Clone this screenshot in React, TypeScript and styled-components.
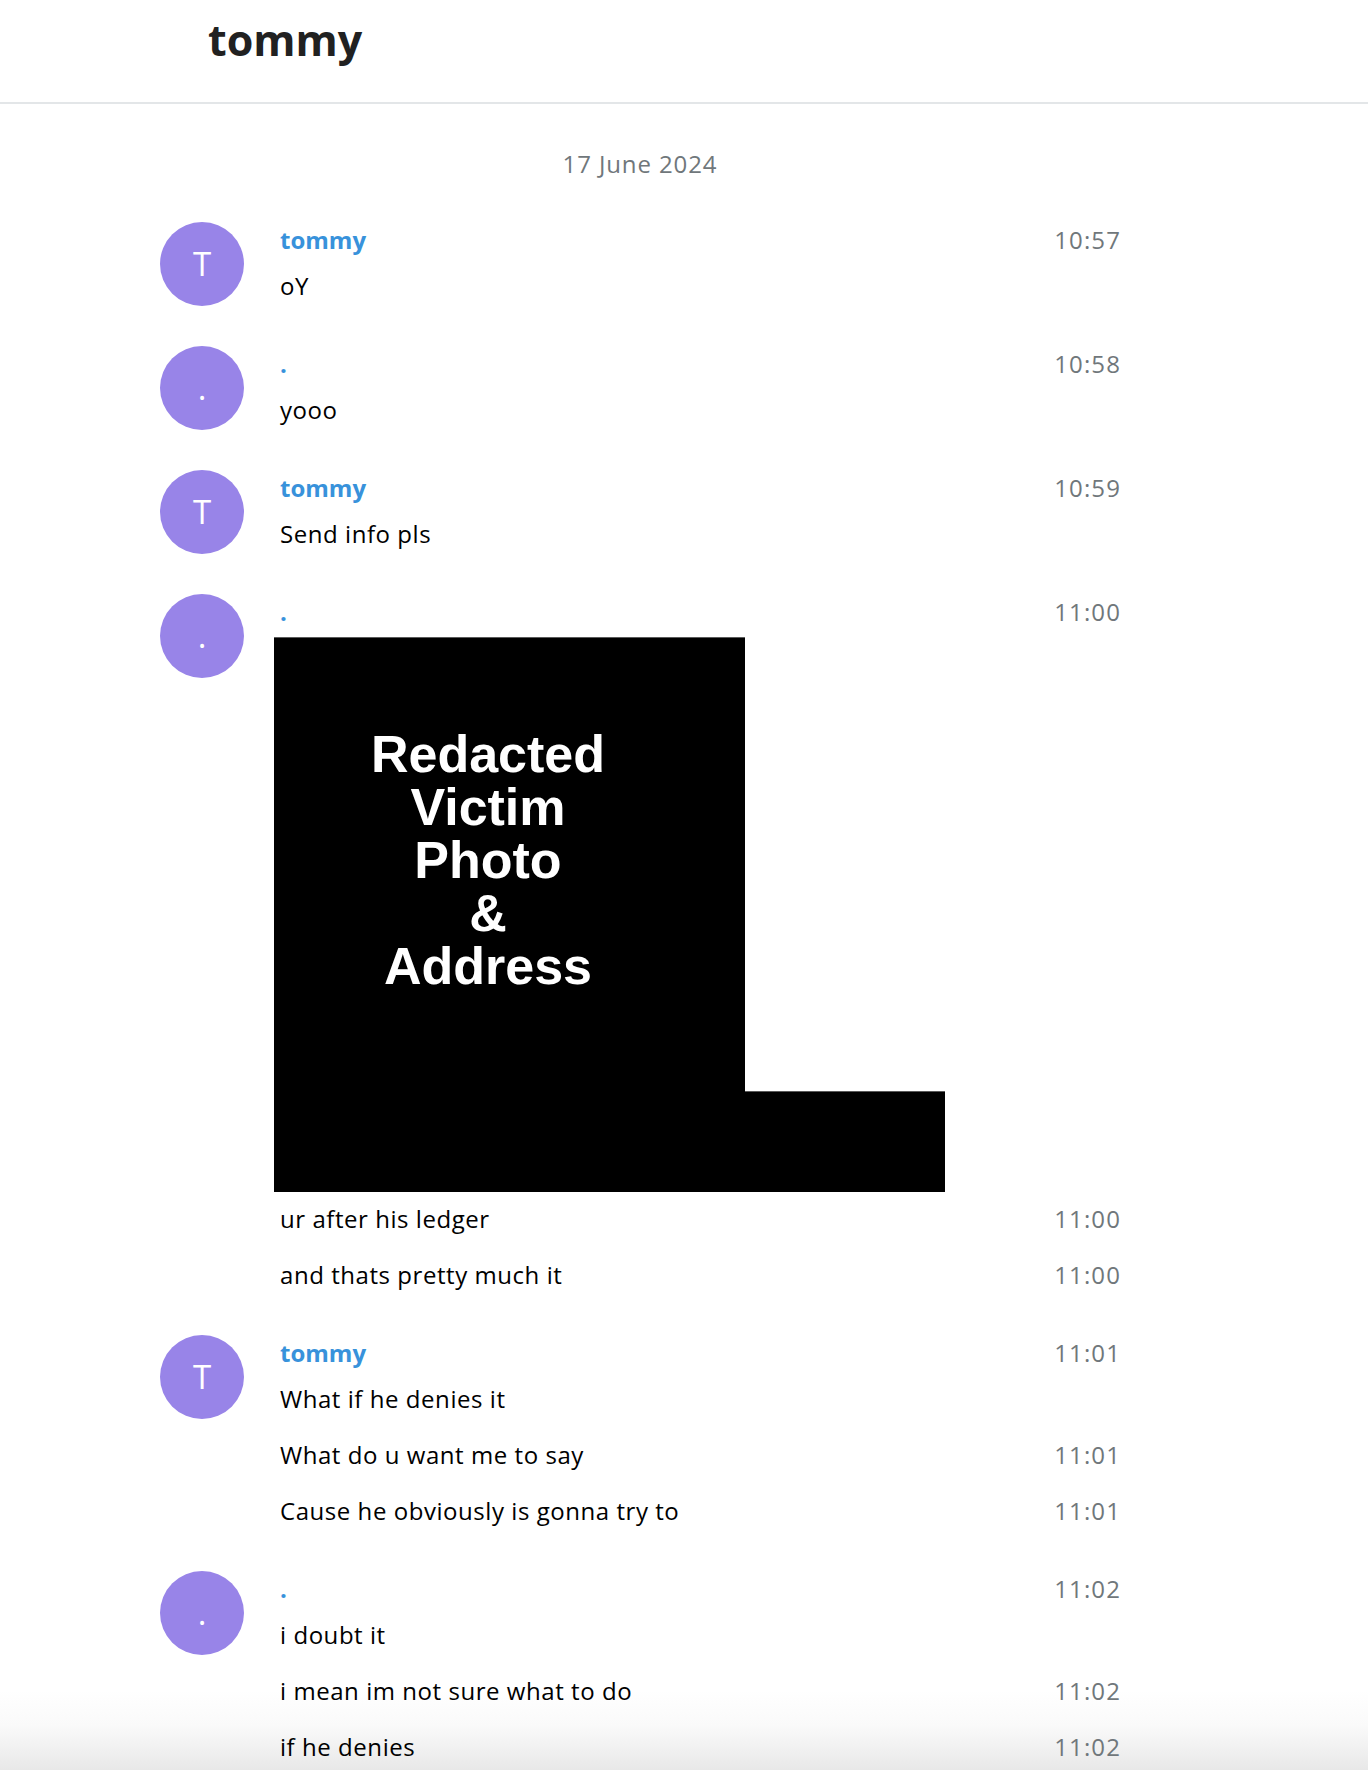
import * as React from "react";
import styled, { createGlobalStyle } from "styled-components";

const GlobalStyle = createGlobalStyle`
  html, body {
    margin: 0;
    padding: 0;
  }
  body {
    font-family: "Open Sans", "Liberation Sans", Arial, sans-serif;
    font-size: 24px;
    line-height: 36px;
    color: #000000;
    background: #ffffff;
  }
`;

const Page = styled.div`
  min-height: 1770px;
  background: linear-gradient(
    to bottom,
    #ffffff 0,
    #ffffff 1690px,
    #fafafa 1725px,
    #e8e8e8 1770px
  );
`;

const Header = styled.div`
  height: 102px;
  border-bottom: 2px solid #e3e6e8;
  padding-left: 208px;
`;

const HeaderTitle = styled.div`
  padding-top: 10px;
  font-size: 43px;
  line-height: 60px;
  font-weight: 700;
  color: #212121;
`;

const Column = styled.div`
  width: 960px;
  margin-left: 160px;
  padding-bottom: 40px;
`;

const DateLabel = styled.div`
  margin-top: 42px;
  margin-bottom: 40px;
  text-align: center;
  color: #70777b;
  letter-spacing: 0.9px;
`;

const Group = styled.div`
  display: flex;
  align-items: flex-start;
  gap: 36px;
  margin-bottom: 42px;
`;

// the circle is a bit taller than name + first line, keep it from pushing the group
const Avatar = styled.div`
  flex: 0 0 84px;
  width: 84px;
  height: 84px;
  margin-bottom: -2px;
  border-radius: 50%;
  background: #9884e8;
  color: #ffffff;
  font-size: 33px;
  line-height: 84px;
  text-align: center;
  user-select: none;
`;

const Body = styled.div`
  flex: 1;
  display: flex;
  flex-direction: column;
`;

const Row = styled.div<{ $gap: number }>`
  display: flex;
  justify-content: space-between;
  align-items: flex-start;
  margin-top: ${(p) => p.$gap}px;
  height: 36px;
`;

const Name = styled.div`
  color: #3892db;
  font-weight: 700;
`;

const Text = styled.span`
  letter-spacing: 0.55px;
`;

const Time = styled.div`
  color: #70777b;
  letter-spacing: 1.1px;
  margin-right: -1px;
`;

const Photo = styled.div`
  display: grid;
  grid-template-columns: 471px 200px;
  grid-template-rows: 454px 101px;
  margin-top: 7px;
  margin-left: -6px;
`;

const PhotoMain = styled.div`
  grid-column: 1;
  grid-row: 1 / span 2;
  background: #000000;
  box-shadow: inset 0 1px 0 #5a5a5a;
  padding: 91px 43px 0 0;
  color: #ffffff;
  font-family: "Liberation Sans", Arial, sans-serif;
  font-weight: 700;
  font-size: 52px;
  line-height: 53px;
  text-align: center;
`;

const PhotoTail = styled.div`
  grid-column: 2;
  grid-row: 2;
  background: #000000;
  box-shadow: inset 0 1px 0 #5a5a5a;
`;

type Item =
  | { kind: "text"; text: string; time: string }
  | { kind: "photo"; time: string };

interface IGroup {
  initial: string;
  name: string;
  items: Item[];
}

const groups: IGroup[] = [
  { initial: "T", name: "tommy", items: [{ kind: "text", text: "oY", time: "10:57" }] },
  { initial: ".", name: ".", items: [{ kind: "text", text: "yooo", time: "10:58" }] },
  { initial: "T", name: "tommy", items: [{ kind: "text", text: "Send info pls", time: "10:59" }] },
  {
    initial: ".",
    name: ".",
    items: [
      { kind: "photo", time: "11:00" },
      { kind: "text", text: "ur after his ledger", time: "11:00" },
      { kind: "text", text: "and thats pretty much it", time: "11:00" },
    ],
  },
  {
    initial: "T",
    name: "tommy",
    items: [
      { kind: "text", text: "What if he denies it", time: "11:01" },
      { kind: "text", text: "What do u want me to say", time: "11:01" },
      { kind: "text", text: "Cause he obviously is gonna try to", time: "11:01" },
    ],
  },
  {
    initial: ".",
    name: ".",
    items: [
      { kind: "text", text: "i doubt it", time: "11:02" },
      { kind: "text", text: "i mean im not sure what to do", time: "11:02" },
      { kind: "text", text: "if he denies", time: "11:02" },
    ],
  },
];

// spacing above a line depends on what sits right before it
const gapAfter = (prev: Item | undefined) => {
  if (!prev) return 10;
  if (prev.kind === "photo") return 9;
  return 20;
};

const MessageGroup = ({ group }: { group: IGroup }) => (
  <Group>
    <Avatar>{group.initial}</Avatar>
    <Body>
      <Row $gap={0}>
        <Name>{group.name}</Name>
        <Time>{group.items[0].time}</Time>
      </Row>
      {group.items.map((item, index) => {
        if (item.kind === "photo") {
          return (
            <Photo key={index}>
              <PhotoMain>
                Redacted
                <br />
                Victim
                <br />
                Photo
                <br />
                &amp;
                <br />
                Address
              </PhotoMain>
              <PhotoTail />
            </Photo>
          );
        }
        return (
          <Row key={index} $gap={gapAfter(group.items[index - 1])}>
            <Text>{item.text}</Text>
            {index > 0 && <Time>{item.time}</Time>}
          </Row>
        );
      })}
    </Body>
  </Group>
);

const App = () => (
  <Page>
    <GlobalStyle />
    <Header>
      <HeaderTitle>tommy</HeaderTitle>
    </Header>
    <Column>
      <DateLabel>17 June 2024</DateLabel>
      {groups.map((group, index) => (
        <MessageGroup key={index} group={group} />
      ))}
    </Column>
  </Page>
);

export default App;
